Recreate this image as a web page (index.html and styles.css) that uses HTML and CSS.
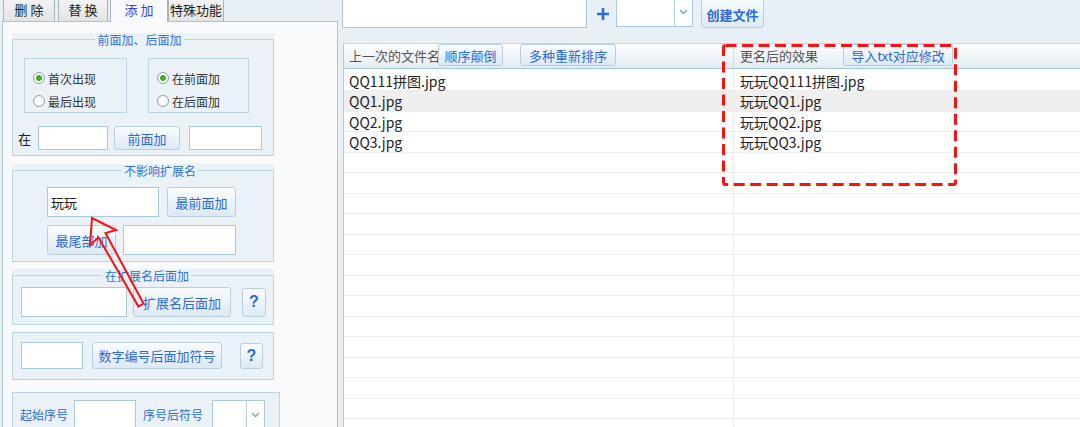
FILE: index.html
```html
<!DOCTYPE html>
<html lang="zh-CN">
<head>
    <meta charset="UTF-8">
    <title>批量更名 - 添加</title>
    <link rel="stylesheet" href="styles.css">
</head>
<body>
    <div class="app">
        <div class="left">
            <div class="tabs">
                <div class="tab t1">删 除</div>
                <div class="tab t2">替 换</div>
                <div class="tab t3 active">添 加</div>
                <div class="tab t4">特殊功能</div>
            </div>
            <div class="panel">
                <div class="group g1">
                    <fieldset>
                        <legend>前面加、后面加</legend>
                        <div class="subs">
                            <div class="sub s1">
                                <label class="radio"><input type="radio" name="which" checked>首次出现</label>
                                <label class="radio"><input type="radio" name="which">最后出现</label>
                            </div>
                            <div class="sub s2">
                                <label class="radio"><input type="radio" name="side" checked>在前面加</label>
                                <label class="radio"><input type="radio" name="side">在后面加</label>
                            </div>
                        </div>
                        <div class="row r-at">
                            <span class="at">在</span>
                            <input class="txt w-at1" type="text">
                            <button class="btn b-front">前面加</button>
                            <input class="txt w-at2" type="text">
                        </div>
                    </fieldset>
                </div>

                <div class="group g2">
                    <fieldset>
                        <legend>不影响扩展名</legend>
                        <div class="row r-first">
                            <input class="txt w-play" type="text" value="玩玩">
                            <button class="btn b-first">最前面加</button>
                        </div>
                        <div class="row r-last">
                            <button class="btn b-last">最尾部加</button>
                            <input class="txt w-last" type="text">
                        </div>
                    </fieldset>
                </div>

                <div class="group g3">
                    <fieldset>
                        <legend>在扩展名后面加</legend>
                        <div class="row r-ext">
                            <input class="txt w-ext" type="text">
                            <button class="btn b-ext">扩展名后面加</button>
                            <button class="btn help h1">?</button>
                        </div>
                    </fieldset>
                </div>

                <div class="group g4">
                    <fieldset>
                        <div class="row r-num">
                            <input class="txt w-num" type="text">
                            <button class="btn b-num">数字编号后面加符号</button>
                            <button class="btn help h2">?</button>
                        </div>
                    </fieldset>
                </div>

                <div class="group g5">
                    <fieldset>
                        <div class="row r-seq">
                            <span class="blue-lbl l-start">起始序号</span>
                            <input class="txt w-start" type="text">
                            <span class="blue-lbl l-sym">序号后符号</span>
                            <div class="combo c-sym">
                                <span class="combo-field"></span>
                                <span class="combo-arrow">
                                    <svg width="9" height="6" viewBox="0 0 9 6"><path d="M1 1l3.5 3.5L8 1" fill="none" stroke="#6c9cd4" stroke-width="1.3"/></svg>
                                </span>
                            </div>
                        </div>
                    </fieldset>
                </div>
            </div>
        </div>

        <div class="right">
            <div class="toolbar">
                <input class="txt top-input" type="text">
                <svg class="plus" width="12" height="12" viewBox="0 0 12 12">
                    <path d="M6 0v12M0 6h12" stroke="#2f6cd6" stroke-width="2.6"/>
                </svg>
                <div class="combo c-top">
                    <span class="combo-field"></span>
                    <span class="combo-arrow">
                        <svg width="9" height="6" viewBox="0 0 9 6"><path d="M1 1l3.5 3.5L8 1" fill="none" stroke="#6c9cd4" stroke-width="1.3"/></svg>
                    </span>
                </div>
                <button class="btn b-create">创建文件</button>
            </div>

            <div class="list">
                <div class="head">
                    <div class="hcell col1">
                        <span class="hlabel">上一次的文件名</span>
                        <button class="btn hbtn b-rev">顺序颠倒</button>
                        <button class="btn hbtn b-sort">多种重新排序</button>
                    </div>
                    <div class="hcell col2">
                        <span class="hlabel2">更名后的效果</span>
                        <button class="btn hbtn b-txt">导入txt对应修改</button>
                    </div>
                </div>
                <div class="rows">
                    <div class="item"><span class="col1">QQ111拼图.jpg</span><span class="col2">玩玩QQ111拼图.jpg</span></div>
                    <div class="item sel"><span class="col1">QQ1.jpg</span><span class="col2">玩玩QQ1.jpg</span></div>
                    <div class="item"><span class="col1">QQ2.jpg</span><span class="col2">玩玩QQ2.jpg</span></div>
                    <div class="item"><span class="col1">QQ3.jpg</span><span class="col2">玩玩QQ3.jpg</span></div>
                    <div class="item"><span class="col1"></span><span class="col2"></span></div>
                    <div class="item"><span class="col1"></span><span class="col2"></span></div>
                    <div class="item"><span class="col1"></span><span class="col2"></span></div>
                    <div class="item"><span class="col1"></span><span class="col2"></span></div>
                    <div class="item"><span class="col1"></span><span class="col2"></span></div>
                    <div class="item"><span class="col1"></span><span class="col2"></span></div>
                    <div class="item"><span class="col1"></span><span class="col2"></span></div>
                    <div class="item"><span class="col1"></span><span class="col2"></span></div>
                    <div class="item"><span class="col1"></span><span class="col2"></span></div>
                    <div class="item"><span class="col1"></span><span class="col2"></span></div>
                    <div class="item"><span class="col1"></span><span class="col2"></span></div>
                    <div class="item"><span class="col1"></span><span class="col2"></span></div>
                    <div class="item"><span class="col1"></span><span class="col2"></span></div>
                    <div class="item"><span class="col1"></span><span class="col2"></span></div>
                </div>
            </div>
        </div>
    </div>

    <!-- 标注：红色虚线框 + 箭头 -->
    <svg class="marks" width="1080" height="427" viewBox="0 0 1080 427">
        <rect x="723.5" y="45.5" width="232" height="139" rx="2" fill="none" stroke="#ff1010" stroke-width="3" stroke-dasharray="11 5.5"/>
        <polygon points="92,218 116,230 105.5,233 143.5,303.5 138.5,306.5 98.5,237.5 90,245" fill="none" stroke="#ff1010" stroke-width="2" stroke-linejoin="miter"/>
    </svg>
</body>
</html>
```

FILE: styles.css
```css
* {
    box-sizing: border-box;
}

body {
    margin: 0;
    width: 1080px;
    height: 427px;
    overflow: hidden;
    position: relative;
    background: #e8f0f5;
    font-family: "Noto Sans CJK SC", "Microsoft YaHei", sans-serif;
    font-size: 13px;
    color: #222;
}

.app {
    display: flex;
    height: 100%;
}

/* ---------- 左侧 ---------- */

.left {
    width: 338px;
    flex: none;
    display: flex;
    flex-direction: column;
    padding-left: 2px;
}

.tabs {
    display: flex;
    align-items: flex-end;
    height: 21px;
    padding-left: 1px;
}

.tab {
    height: 21px;
    border: 1px solid #aab4bc;
    border-top: 0;
    border-bottom: 0;
    background: linear-gradient(#f3f3f3, #e1e3e5);
    text-align: center;
    line-height: 20px;
    font-size: 13px;
    color: #1c1c1c;
}

.t1 { width: 52px; margin-right: 3px; }
.t2 { width: 50px; margin-right: 2px; }
.t3 { width: 58px; }
.t4 { width: 56px; }

.tab.active {
    height: 22px;
    margin-bottom: -1px;
    position: relative;
    z-index: 1;
    background: #f9fafd;
    color: #3b3cf2;
}

.panel {
    flex: 1;
    border: 1px solid #abc1cd;
    border-bottom: 0;
    background: #f8fafc;
    padding: 11px 0 0 9px;
}

.group {
    width: 262px;
    background: #eaf2f7;
    margin-top: 7px;
}

.g1 { margin-top: 0; }
.g2 { margin-top: 8px; }
.g5 { margin-top: 12px; width: 268px; }

fieldset {
    margin: 0;
    min-width: 0;
    border: 1px solid #bcd5e1;
}

legend {
    margin: 0 auto;
    padding: 0 2px;
    font-size: 12px;
    line-height: 13px;
    color: #2f72d6;
}

.g1 fieldset { padding: 12px 11px 5px 4px; }
.g2 fieldset { padding: 10px 0 6px 34px; }
.g3 fieldset { padding: 5px 0 7px 8px; }
.g4 fieldset { padding: 9px 0 10px 8px; }
.g5 fieldset { padding: 7px 0 0 7px; height: 40px; border-bottom: 0; }

.row {
    display: flex;
    align-items: center;
}

.subs {
    display: flex;
    margin-left: 7px;
    gap: 21px;
}

.sub {
    height: 55px;
    border: 1px solid #bcd5e1;
    display: flex;
    flex-direction: column;
    gap: 3px;
    padding: 9px 0 0 8px;
}

.s1 { width: 103px; }
.s2 { width: 101px; }

.radio {
    display: flex;
    align-items: center;
    gap: 3px;
    height: 20px;
    font-size: 12px;
    color: #333;
}

.radio input {
    appearance: none;
    margin: 0;
    width: 12px;
    height: 12px;
    border: 1px solid #8ea2b3;
    border-radius: 50%;
    background: radial-gradient(circle, #fff 45%, #e2e8ed);
}

.radio input:checked {
    background: radial-gradient(circle, #46ad1c 0 2.6px, #fff 3.3px, #e6ebef 100%);
}

.txt {
    height: 24px;
    margin: 0;
    padding: 0 3px;
    border: 1px solid #a9cbd9;
    background: #fff;
    font: inherit;
    color: #222;
    outline: none;
}

.btn {
    margin: 0;
    padding: 0;
    border: 1px solid #b9cedd;
    border-radius: 3px;
    background: linear-gradient(#f9fcff, #dce9f6);
    font-family: inherit;
    font-size: 13px;
    color: #2e6ad6;
    white-space: nowrap;
}

/* 前面加一行 */
.r-at { margin-top: 13px; margin-left: 1px; height: 24px; }
.at { width: 20px; font-size: 13px; color: #1c1c1c; }
.w-at1 { width: 70px; }
.b-front { width: 66px; height: 24px; margin-left: 6px; }
.w-at2 { width: 73px; margin-left: 9px; }

/* 不影响扩展名 */
.r-first { height: 30px; }
.w-play { width: 112px; height: 30px; }
.b-first { width: 69px; height: 30px; margin-left: 8px; }
.r-last { height: 30px; margin-top: 8px; }
.b-last { width: 69px; height: 30px; }
.w-last { width: 113px; height: 30px; margin-left: 7px; }

/* 扩展名后面加 */
.r-ext { height: 30px; }
.w-ext { width: 106px; height: 30px; }
.b-ext { width: 98px; height: 30px; margin-left: 6px; }
.help {
    font-size: 16px;
    font-weight: bold;
    font-family: "Liberation Sans", sans-serif;
}
.h1 { width: 24px; height: 29px; margin-left: 11px; }

.r-num { height: 27px; }
.w-num { width: 62px; height: 27px; }
.b-num { width: 130px; height: 27px; margin-left: 9px; }
.h2 { width: 23px; height: 26px; margin-left: 18px; }

.r-seq { height: 30px; align-items: flex-start; }
.blue-lbl {
    font-size: 12px;
    color: #2f6cd6;
    line-height: 30px;
}
.l-start { width: 48px; margin-top: 0; }
.w-start { width: 62px; height: 30px; margin-left: 6px; }
.l-sym { margin-left: 7px; width: 60px; }

.combo {
    display: flex;
    border: 1px solid #a9cbd9;
    background: #fff;
}

.combo-field { flex: 1; }

.combo-arrow {
    width: 18px;
    border-left: 1px solid #b6d2df;
    display: flex;
    align-items: center;
    justify-content: center;
}

.c-sym { width: 53px; height: 30px; margin-left: 9px; }

/* ---------- 右侧 ---------- */

.right {
    flex: 1;
    display: flex;
    flex-direction: column;
    padding-left: 4px;
}

.toolbar {
    display: flex;
    align-items: flex-start;
    height: 33px;
    margin-top: -4px;
}

.top-input { width: 245px; height: 32px; }

.plus { margin: 12px 0 0 10px; }

.c-top { width: 77px; height: 31px; margin-left: 7px; }

.b-create {
    width: 63px;
    height: 32px;
    margin-left: 8px;
    font-weight: bold;
    padding-top: 4px;
}

.list {
    flex: 1;
    margin: 15px 0 0 1px;
    border-left: 1px solid #b3c9d5;
    border-top: 1px solid #c6d9e3;
    background: #fff;
}

.head {
    display: flex;
    height: 25px;
    border-bottom: 1px solid #a3c7d8;
    background: linear-gradient(#fdfeff, #e3ecf2);
}

.hcell {
    display: flex;
    align-items: flex-start;
}

.head .col1 {
    width: 389px;
    padding-left: 5px;
}

.head .col2 {
    flex: 1;
    border-left: 1px solid #cfdfe8;
    padding-left: 6px;
}

.hlabel,
.hlabel2 {
    flex: none;
    line-height: 24px;
    white-space: nowrap;
    color: #555;
    font-size: 13px;
}

.hlabel { width: 89px; }
.hlabel2 { width: 103px; }

.hbtn { height: 22px; }
.b-rev { width: 65px; }
.b-sort { width: 96px; margin-left: 17px; }
.b-txt { width: 110px; }

.rows {
    padding-top: 1.5px;
}

.item {
    display: flex;
    height: 20.5px;
    border-bottom: 1px solid #ededed;
    font-size: 14px;
    line-height: 21px;
    color: #222;
}

.item.sel {
    background: #efefef;
}

.item .col1 {
    width: 389px;
    padding-left: 5px;
}

.item .col2 {
    flex: 1;
    border-left: 1px solid #ececec;
    padding-left: 6px;
}

/* ---------- 标注 ---------- */

.marks {
    position: absolute;
    left: 0;
    top: 0;
    pointer-events: none;
}
```
